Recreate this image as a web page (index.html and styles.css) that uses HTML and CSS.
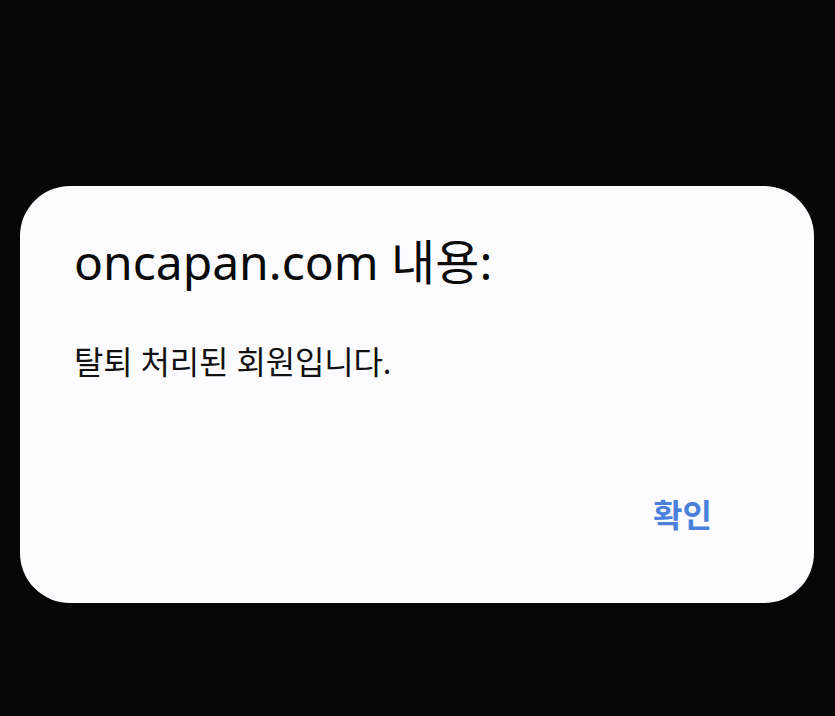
FILE: index.html
```html
<!DOCTYPE html>
<html lang="ko">
<head>
<meta charset="utf-8">
<link rel="stylesheet" href="styles.css">
</head>
<body>
<div class="screen">
  <div class="dialog">
    <h1 class="title">oncapan.com 내용:</h1>
    <p class="message">탈퇴 처리된 회원입니다.</p>
    <div class="actions">
      <button class="ok">확인</button>
    </div>
  </div>
</div>
</body>
</html>
```

FILE: styles.css
```css
html, body {
  margin: 0;
  padding: 0;
  background: #060606;
}
.screen {
  width: 835px;
  height: 716px;
  padding: 186px 21px 0 20px;
  box-sizing: border-box;
}
.dialog {
  background: #fcfcfe;
  border-radius: 50px;
  height: 417px;
  box-sizing: border-box;
  padding: 0 54px 0 54px;
  display: flex;
  flex-direction: column;
  font-family: "Noto Sans", "Noto Sans CJK KR", sans-serif;
}
.title {
  margin: 44px 0 0 0;
  font-size: 48px;
  font-weight: 400;
  line-height: 64px;
  color: #0a0a0a;
  letter-spacing: 0;
}
.message {
  margin: 46px 0 0 0;
  font-size: 32px;
  line-height: 44px;
  color: #111;
  letter-spacing: -0.2px;
}
.actions {
  display: flex;
  justify-content: flex-end;
  margin-top: 107px;
}
.ok {
  border: none;
  background: none;
  padding: 0;
  margin-right: 48px;
  font-family: "Noto Sans CJK KR", sans-serif;
  font-size: 32px;
  font-weight: 700;
  color: #4a80dc;
  line-height: 44px;
}
```
